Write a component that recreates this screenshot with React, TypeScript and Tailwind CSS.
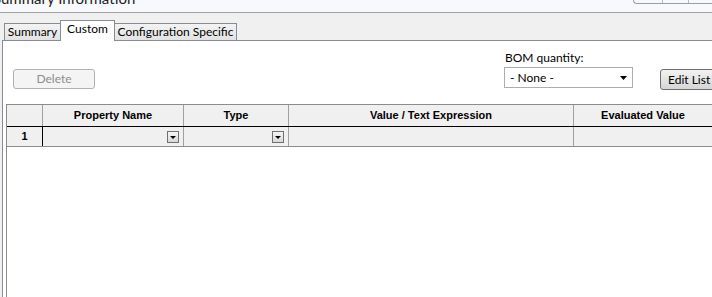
import React from "react";

// tiny filled down arrow used by the combo boxes
function DownArrow({ w = 7, h = 4 }: { w?: number; h?: number }) {
  return (
    <svg width={w} height={h} viewBox={`0 0 ${w} ${h}`}>
      <polygon points={`0,0 ${w},0 ${w / 2},${h}`} fill="#000" />
    </svg>
  );
}

function CellDrop() {
  return (
    <div className="mr-[4px] flex h-[12px] w-[12px] items-center justify-center border border-[#707070] bg-gradient-to-b from-[#f6f6f6] to-[#d8d8d8] pt-[1px]">
      <DownArrow w={6} h={3} />
    </div>
  );
}

export default function App() {
  const ui = "font-['Lato','Open_Sans',sans-serif]";
  const grid = "grid grid-cols-[36px_141px_105px_285px_1fr]";

  return (
    <div className={`flex h-[297px] w-[712px] flex-col overflow-hidden bg-[#f0f0f0] text-black ${ui}`}>
      {/* window title, mostly scrolled off */}
      <div className="flex h-[12px] justify-between overflow-hidden bg-[#f7f9fc]">
        <span className="-ml-[7px] -mt-[11px] whitespace-nowrap text-[15px] leading-[18px] text-[#1e1e1e]">
          Summary Information
        </span>
        <div className="flex h-[4px] w-[79px] shrink-0 rounded-bl-[4px] border-b border-l border-[#9a9ea6]">
          <div className="w-[29px] border-r border-[#b5b9c0]" />
          <div className="w-[26px] border-r border-[#b5b9c0]" />
        </div>
      </div>

      {/* tab strip */}
      <div className="flex h-[28px] items-end border-t border-[#a0a0a0] bg-[#f0f0f0] pl-[4px] text-[12px]">
        <div className="flex h-[17px] w-[56px] shrink-0 justify-center border-l border-t border-[#898c95] bg-gradient-to-b from-[#f3f3f3] to-[#e3e3e3] leading-[16px]">
          Summary
        </div>
        <div className="relative z-10 -mb-px flex h-[21px] w-[55px] shrink-0 justify-center border-l border-r border-t border-[#898c95] bg-white leading-[16px]">
          Custom
        </div>
        <div className="flex h-[17px] w-[122px] shrink-0 justify-center border-r border-t border-[#898c95] bg-gradient-to-b from-[#f3f3f3] to-[#e3e3e3] leading-[16px]">
          Configuration Specific
        </div>
      </div>

      {/* tab page */}
      <div className="ml-[2px] flex flex-1 flex-col border-l border-t border-[#898c95] bg-white">
        <div className="flex h-[63px] items-start text-[12px]">
          <button className="ml-[10px] mt-[28px] h-[20px] w-[82px] shrink-0 rounded-[3px] border border-[#adb2b5] bg-[#f4f4f4] leading-[18px] text-[#8d8d8d]">
            Delete
          </button>
          <div className="ml-[409px] mt-[9px] flex shrink-0 flex-col">
            <span className="h-[15px] pl-px leading-[15px]">BOM quantity:</span>
            <div className="mt-[2px] flex h-[21px] w-[129px] items-center justify-between border border-[#abadb3] bg-white pl-[5px] pr-[5px]">
              <span className="leading-[16px]">- None -</span>
              <DownArrow />
            </div>
          </div>
          <button className="ml-[27px] mt-[28px] h-[21px] w-[60px] shrink-0 rounded-[3px] border border-[#707070] bg-gradient-to-b from-[#f2f2f2] to-[#d6d6d6] pl-[7px] text-left leading-[18px]">
            Edit List
          </button>
        </div>

        {/* property grid */}
        <div className="ml-[3px] flex-1 border-l border-t border-[#8c8c8c] font-['Liberation_Sans',Arial,sans-serif] text-[11px] font-bold">
          <div className={`${grid} h-[22px] border-b border-black bg-[#f0f0f0]`}>
            <div className="border-r border-[#a0a0a0]" />
            <div className="flex items-center justify-center border-r border-[#a0a0a0]">Property Name</div>
            <div className="flex items-center justify-center border-r border-[#a0a0a0]">Type</div>
            <div className="flex items-center justify-center border-r border-[#a0a0a0]">Value / Text Expression</div>
            <div className="flex items-center justify-center">Evaluated Value</div>
          </div>
          <div className={`${grid} h-[20px] border-b border-[#8c8c8c] bg-[#f0f0f0]`}>
            <div className="flex items-center justify-center border-r border-black">1</div>
            <div className="flex items-center justify-end border-r border-[#a0a0a0]">
              <CellDrop />
            </div>
            <div className="flex items-center justify-end border-r border-[#a0a0a0]">
              <CellDrop />
            </div>
            <div className="border-r border-[#a0a0a0]" />
            <div />
          </div>
        </div>
      </div>
    </div>
  );
}
